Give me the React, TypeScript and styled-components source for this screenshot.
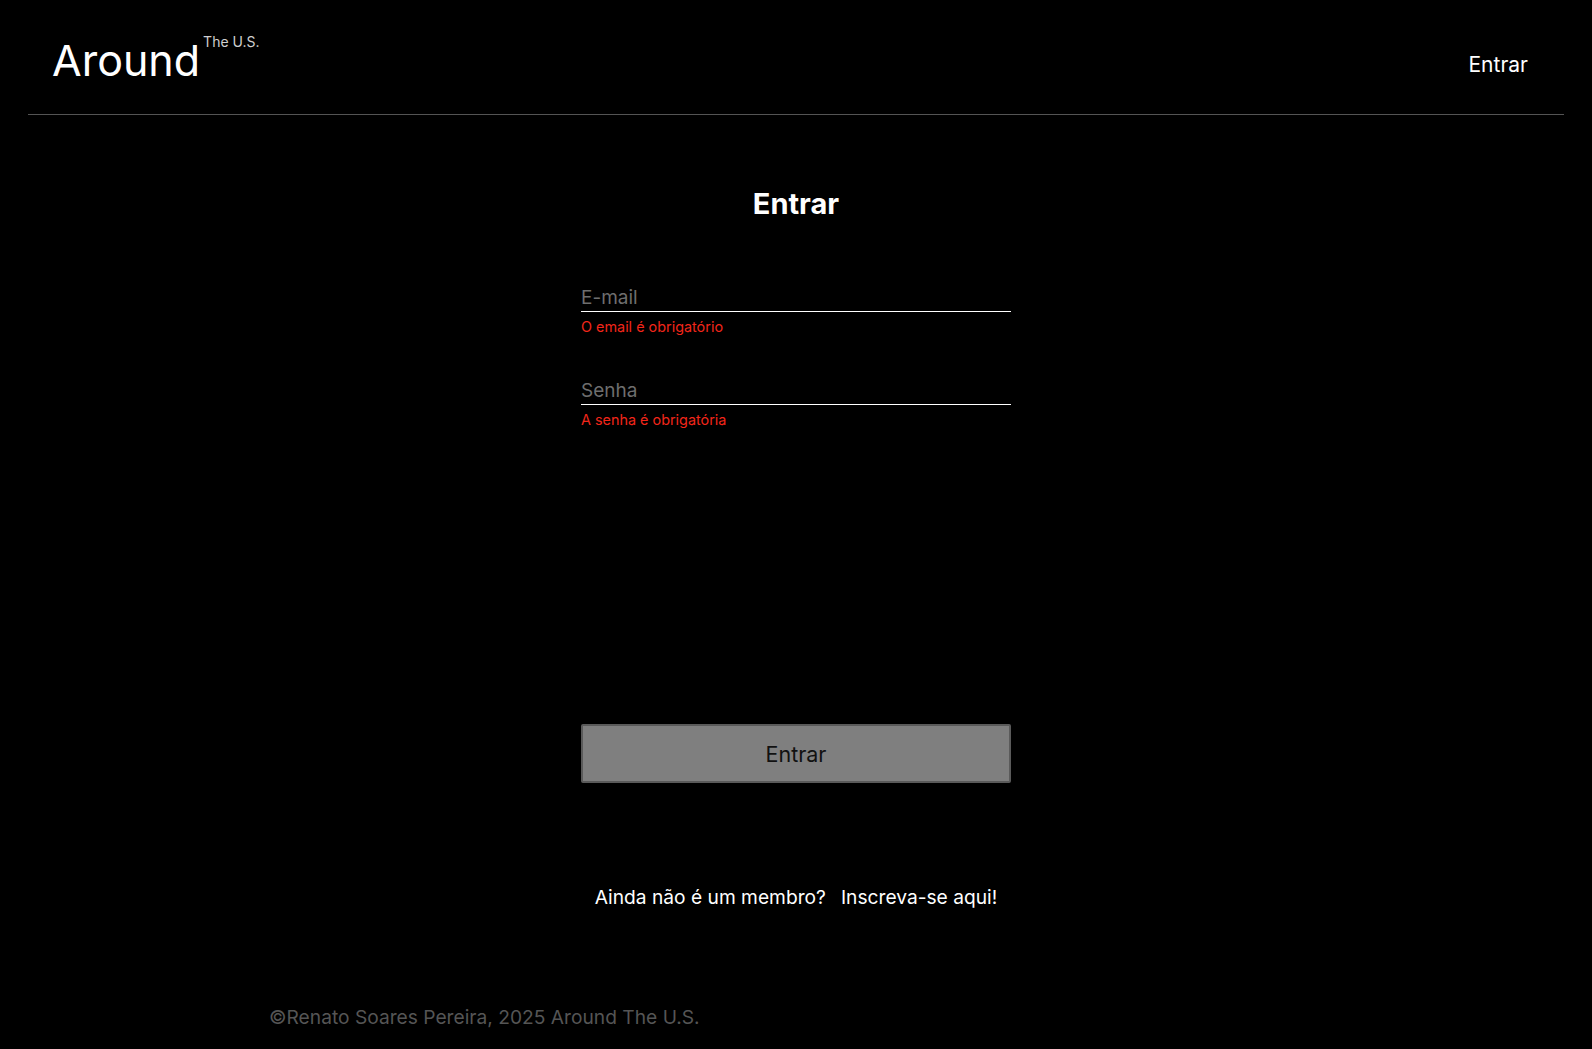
import React from "react";
import styled, { createGlobalStyle } from "styled-components";

const GlobalStyle = createGlobalStyle`
  body {
    margin: 0;
    background: #000;
    color: #fff;
    font-family: Inter, "Noto Sans", Arial, sans-serif;
  }
  * {
    box-sizing: border-box;
  }
`;

const App = () => {
  return (
    <>
      <GlobalStyle />
      <StyledPage>
        <StyledHeader>
          <StyledLogo>
            <span>Around</span>
            <sup>The U.S.</sup>
          </StyledLogo>
          <StyledNavLink href="#">Entrar</StyledNavLink>
        </StyledHeader>

        <StyledMain>
          <StyledTitle>Entrar</StyledTitle>
          <StyledForm noValidate onSubmit={(e) => e.preventDefault()}>
            <StyledField>
              <StyledInput type="email" placeholder="E-mail" />
              <StyledError>O email é obrigatório</StyledError>
            </StyledField>
            <StyledField>
              <StyledInput type="password" placeholder="Senha" />
              <StyledError>A senha é obrigatória</StyledError>
            </StyledField>
            <StyledSubmit type="submit" disabled>
              Entrar
            </StyledSubmit>
          </StyledForm>
          <StyledSignup>
            Ainda não é um membro?
            <a href="#">Inscreva-se aqui!</a>
          </StyledSignup>
        </StyledMain>

        <StyledFooter>©Renato Soares Pereira, 2025 Around The U.S.</StyledFooter>
      </StyledPage>
    </>
  );
};

export default App;

const StyledPage = styled.div`
  padding: 0 28px;
  min-height: 1049px;
`;

const StyledHeader = styled.header`
  height: 115px;
  padding: 38px 36px 0 24px;
  border-bottom: 1px solid #545454;
  display: flex;
  align-items: flex-start;
  justify-content: space-between;
`;

const StyledLogo = styled.div`
  display: flex;
  align-items: flex-start;

  span {
    font-size: 43px;
    line-height: 44px;
    color: #fff;
  }

  sup {
    font-size: 14px;
    line-height: 14px;
    color: #cfcfcf;
    margin: -3px 0 0 3px;
    vertical-align: baseline;
  }
`;

const StyledNavLink = styled.a`
  font-size: 21px;
  line-height: 21px;
  margin-top: 16px;
  color: #fff;
  text-decoration: none;
`;

const StyledMain = styled.main`
  display: flex;
  flex-direction: column;
  align-items: center;
`;

const StyledTitle = styled.h1`
  margin: 74px 0 0;
  font-size: 29px;
  line-height: 29px;
  font-weight: 700;
`;

const StyledForm = styled.form`
  width: 430px;
  margin-top: 65px;
  display: flex;
  flex-direction: column;
`;

const StyledField = styled.div`
  display: flex;
  flex-direction: column;

  & + & {
    margin-top: 42px;
  }
`;

const StyledInput = styled.input`
  height: 29px;
  padding: 0;
  background: none;
  border: 0;
  border-bottom: 1px solid #fff;
  outline: none;
  color: #fff;
  font-family: inherit;
  font-size: 19px;

  &::placeholder {
    color: #6e6e6e;
  }
`;

const StyledError = styled.span`
  margin-top: 8px;
  font-size: 14.4px;
  line-height: 14px;
  color: #f2261a;
`;

const StyledSubmit = styled.button`
  margin-top: 297px;
  height: 59px;
  background: #7f7f7f;
  border: 2px solid #5a5a5a;
  border-radius: 2px;
  color: #111;
  font-family: inherit;
  font-size: 21.5px;
  cursor: default;
`;

const StyledSignup = styled.p`
  margin: 104px 0 0;
  font-size: 19.2px;
  line-height: 20px;
  color: #fff;
  display: flex;
  gap: 15px;

  a {
    color: #fff;
    text-decoration: none;
  }
`;

const StyledFooter = styled.footer`
  margin-top: 101px;
  padding-left: 241px;
  font-size: 19.2px;
  line-height: 19px;
  color: #555;
`;
